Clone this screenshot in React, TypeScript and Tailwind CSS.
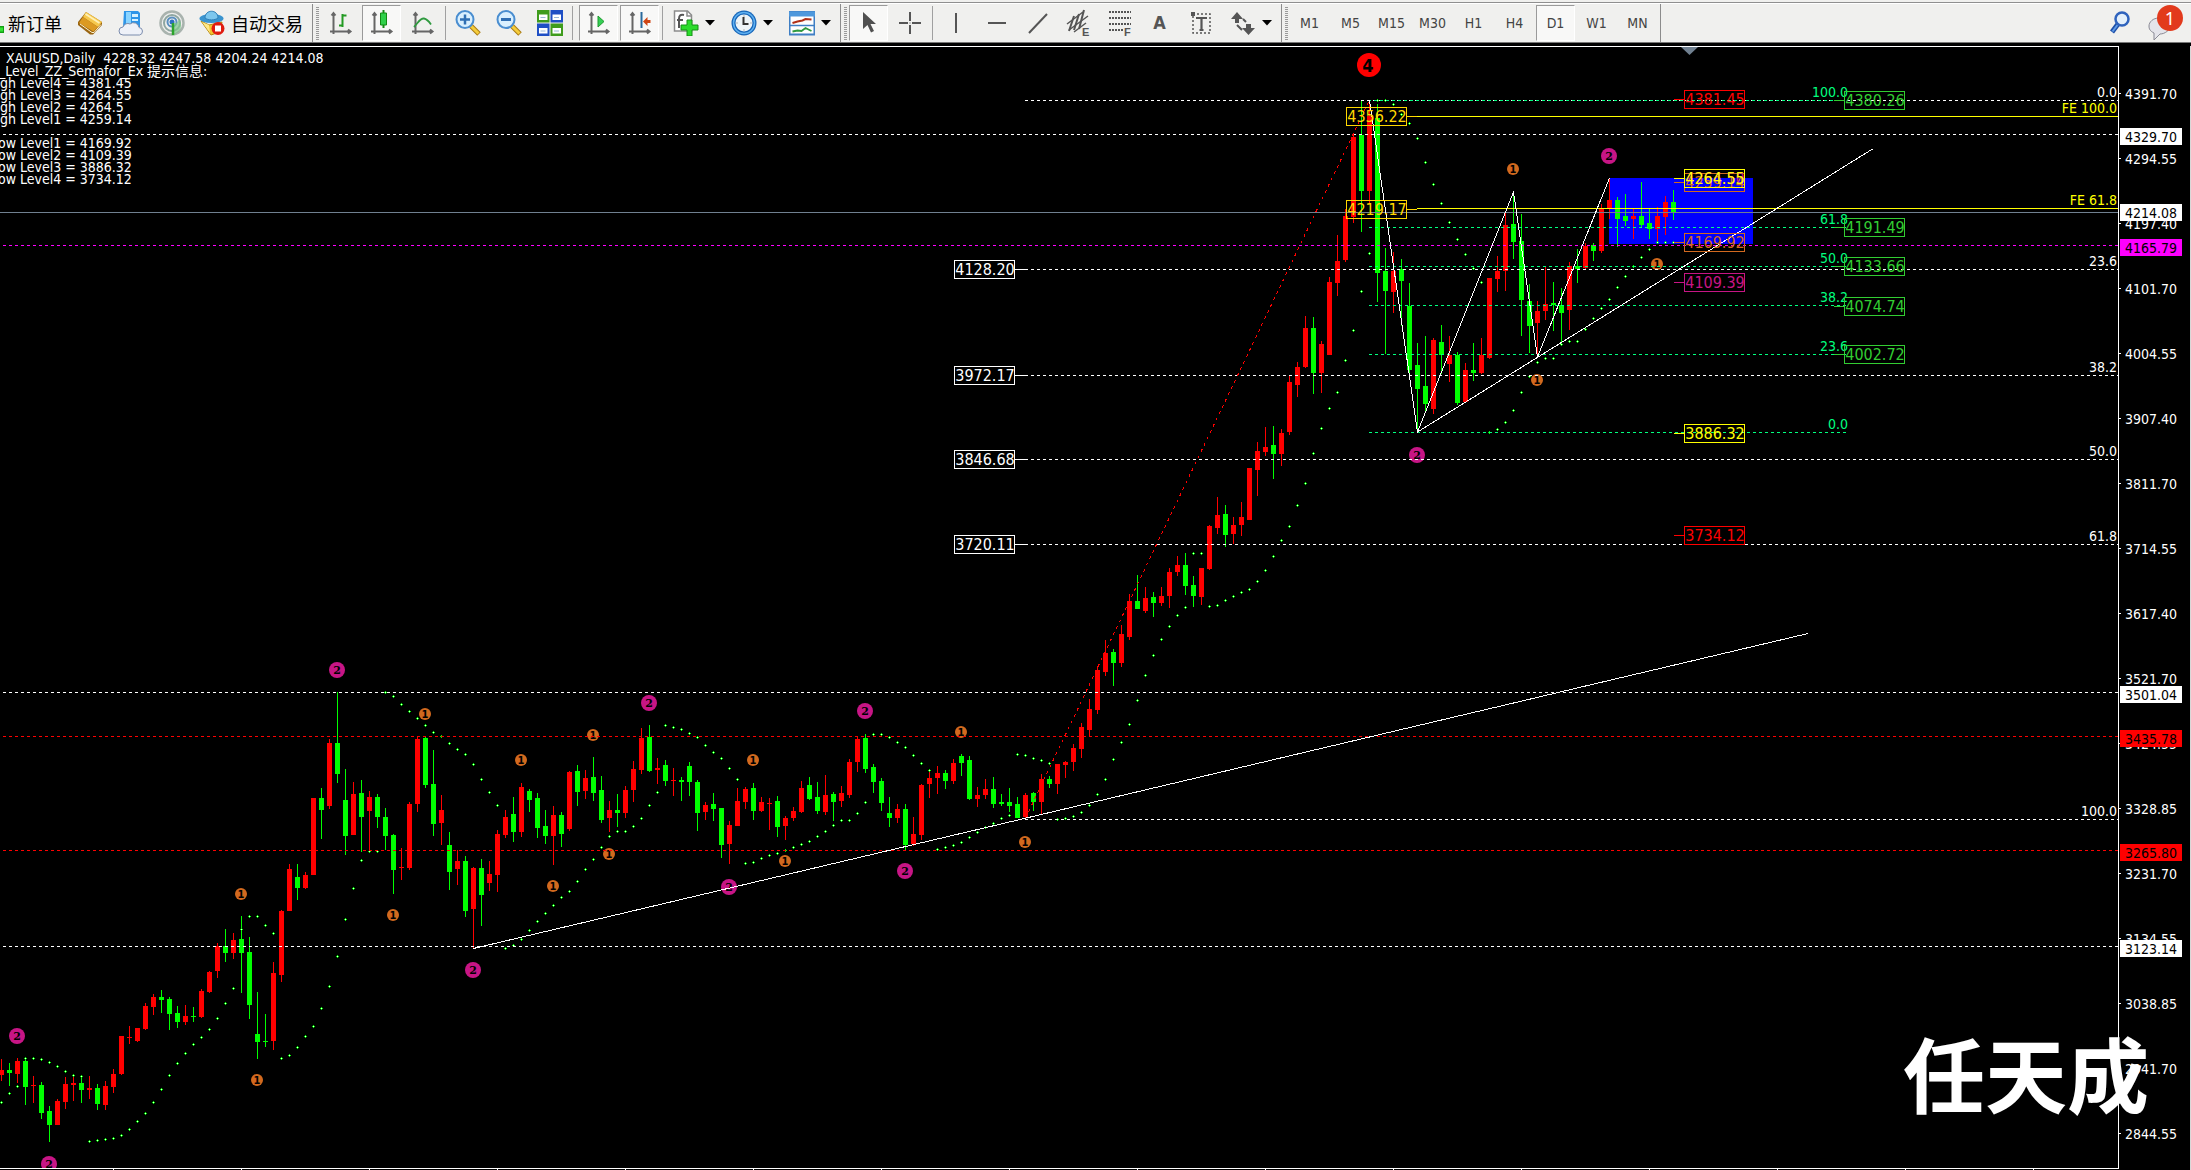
import React from "react";
import clsx from "clsx";

type Candle = [number, number, number, number];

// open, high, low, close as heights on the chart; one candle every 8 units
const candles: Candle[] = [
  [1075, 1059, 1081, 1070], [1070, 1063, 1086, 1073], [1074, 1058, 1083, 1061], [1061, 1059, 1105, 1087],
  [1086, 1076, 1103, 1085], [1085, 1082, 1119, 1113], [1111, 1106, 1142, 1125], [1125, 1099, 1125, 1101],
  [1102, 1077, 1109, 1084], [1085, 1076, 1101, 1083], [1083, 1076, 1103, 1090], [1090, 1076, 1099, 1088],
  [1088, 1084, 1110, 1104], [1105, 1081, 1110, 1086], [1087, 1069, 1093, 1074], [1074, 1036, 1075, 1036],
  [1038, 1026, 1044, 1037], [1041, 1028, 1042, 1028], [1029, 1003, 1030, 1006], [1007, 994, 1015, 997],
  [997, 990, 1013, 1000], [999, 997, 1030, 1014], [1013, 1006, 1028, 1022], [1022, 1005, 1025, 1016],
  [1016, 1007, 1022, 1017], [1017, 989, 1018, 991], [992, 971, 993, 972], [971, 943, 978, 946],
  [946, 929, 962, 953], [953, 933, 959, 940], [939, 916, 993, 953], [952, 937, 1019, 1005],
  [1034, 992, 1059, 1042], [1041, 1014, 1047, 1042], [1041, 962, 1050, 973], [975, 910, 982, 911],
  [911, 864, 911, 869], [877, 864, 900, 888], [888, 872, 889, 875], [875, 798, 875, 798],
  [798, 788, 839, 810], [806, 739, 809, 743], [743, 692, 783, 774], [800, 769, 855, 836],
  [835, 782, 835, 794], [793, 780, 852, 817], [811, 791, 852, 797], [797, 794, 828, 817],
  [817, 808, 850, 836], [835, 834, 894, 870], [868, 848, 880, 867], [868, 802, 870, 804],
  [804, 736, 812, 739], [738, 737, 788, 785], [784, 750, 836, 824], [823, 795, 845, 810],
  [845, 832, 890, 872], [869, 850, 885, 861], [861, 856, 917, 911], [909, 867, 948, 868],
  [868, 859, 926, 895], [883, 861, 891, 874], [875, 830, 892, 834], [835, 810, 838, 817],
  [814, 797, 842, 832], [832, 783, 837, 787], [791, 789, 812, 800], [798, 793, 838, 828],
  [826, 810, 844, 836], [836, 806, 865, 815], [815, 812, 847, 834], [829, 771, 831, 772],
  [771, 765, 806, 792], [791, 770, 799, 778], [777, 757, 801, 793], [790, 776, 823, 820],
  [818, 801, 832, 810], [810, 794, 827, 813], [813, 786, 818, 790], [790, 761, 802, 769],
  [770, 728, 774, 738], [737, 725, 772, 771], [770, 758, 784, 768], [765, 760, 786, 781],
  [781, 768, 796, 780], [780, 777, 801, 782], [766, 762, 796, 782], [782, 780, 831, 813],
  [812, 802, 820, 805], [804, 793, 821, 809], [808, 808, 858, 845], [844, 821, 864, 825],
  [826, 788, 826, 801], [802, 787, 809, 789], [788, 783, 820, 811], [811, 797, 812, 802],
  [804, 798, 830, 803], [801, 796, 837, 827], [826, 816, 840, 818], [818, 807, 821, 811],
  [812, 781, 813, 788], [785, 777, 800, 799], [797, 782, 814, 811], [812, 775, 815, 795],
  [794, 792, 821, 802], [801, 786, 807, 793], [795, 759, 798, 762], [762, 737, 772, 739],
  [738, 734, 773, 769], [767, 764, 793, 782], [781, 778, 811, 803], [813, 797, 827, 818],
  [818, 804, 823, 809], [809, 804, 850, 845], [844, 817, 846, 834], [835, 784, 840, 785],
  [784, 771, 798, 778], [778, 766, 794, 773], [773, 770, 789, 781], [781, 759, 784, 763],
  [756, 754, 776, 763], [760, 756, 800, 799], [799, 787, 807, 795], [795, 779, 799, 789],
  [789, 777, 808, 804], [802, 794, 806, 804], [802, 788, 812, 806], [804, 797, 818, 818],
  [817, 793, 819, 795], [793, 792, 811, 802], [802, 774, 814, 779], [779, 776, 788, 784],
  [784, 764, 794, 764], [765, 761, 778, 762], [762, 744, 771, 748], [749, 723, 758, 727],
  [730, 699, 737, 709], [710, 666, 714, 670], [672, 640, 676, 653], [652, 649, 686, 663],
  [663, 625, 667, 634], [637, 594, 640, 601], [601, 575, 609, 609], [611, 587, 613, 598],
  [597, 592, 617, 603], [603, 587, 606, 596], [596, 568, 608, 572], [572, 556, 576, 565],
  [565, 553, 595, 586], [585, 576, 607, 596], [597, 568, 605, 568], [569, 525, 570, 526],
  [528, 497, 534, 515], [514, 505, 547, 535], [534, 517, 544, 525], [525, 502, 536, 517],
  [520, 468, 520, 468], [470, 442, 496, 451], [452, 427, 456, 447], [445, 426, 479, 454],
  [454, 429, 466, 433], [432, 376, 435, 382], [385, 362, 397, 367], [367, 316, 368, 328],
  [328, 317, 394, 373], [373, 341, 393, 344], [355, 277, 355, 282], [283, 235, 296, 261],
  [260, 209, 262, 216], [217, 133, 223, 137], [135, 101, 232, 191], [191, 101, 203, 116],
  [118, 104, 302, 273], [271, 248, 354, 291], [292, 252, 313, 271], [269, 259, 326, 281],
  [306, 283, 373, 370], [365, 343, 432, 389], [386, 336, 413, 404], [409, 338, 414, 340],
  [342, 325, 374, 355], [364, 336, 382, 355], [355, 352, 405, 403], [402, 363, 403, 370],
  [370, 343, 381, 373], [373, 338, 374, 355], [358, 278, 359, 278], [279, 256, 292, 271],
  [271, 211, 291, 225], [224, 193, 259, 242], [241, 214, 336, 300], [301, 284, 353, 326],
  [323, 301, 357, 311], [311, 267, 320, 304], [303, 282, 331, 305], [305, 288, 345, 313],
  [310, 262, 330, 266], [266, 249, 283, 269], [268, 243, 269, 246], [245, 243, 261, 251],
  [251, 204, 253, 209], [209, 178, 219, 200], [200, 197, 247, 219], [216, 194, 226, 221],
  [219, 209, 239, 216], [216, 182, 228, 225], [223, 209, 239, 229], [229, 207, 243, 216],
  [217, 196, 235, 202], [202, 190, 220, 213],
];

// Parabolic SAR, one value per candle
const sar = [
  1102, 1093, 1086, 1058, 1058, 1059, 1062, 1066, 1071, 1075, 1076, 1141, 1140, 1139, 1138, 1135, 1129, 1121, 1113,
  1102, 1089, 1075, 1063, 1053, 1044, 1037, 1029, 1018, 1003, 988, 929, 916, 916, 925, 933, 1058, 1055, 1047, 1036,
  1026, 1008, 986, 956, 919, 888, 860, 851, 851, 692, 696, 704, 711, 718, 725, 732, 736, 743, 749, 754, 764, 779,
  792, 805, 948, 945, 939, 930, 921, 913, 905, 897, 891, 881, 869, 859, 847, 836, 831, 831, 826, 818, 805, 792, 725,
  727, 729, 733, 737, 745, 752, 758, 768, 779, 863, 862, 858, 855, 853, 850, 847, 844, 841, 836, 831, 825, 820, 820,
  813, 802, 734, 734, 737, 742, 747, 755, 763, 770, 849, 847, 845, 842, 837, 832, 827, 823, 818, 815, 754, 755, 758,
  760, 763, 819, 818, 816, 812, 805, 794, 779, 759, 742, 724, 700, 675, 655, 639, 626, 615, 607, 553, 553, 606, 605,
  600, 596, 592, 589, 581, 570, 556, 540, 526, 505, 483, 453, 428, 408, 392, 360, 330, 291, 253, 100, 100, 104, 114,
  123, 138, 162, 184, 203, 222, 239, 254, 268, 282, 432, 429, 422, 410, 392, 376, 362, 358, 358, 344, 341, 341, 329,
  318, 308, 299, 287, 276, 266, 257, 249, 242, 242, 242,
];

const bigMarks = [
  [337, 670], [17, 1036], [49, 1164], [473, 970], [649, 703], [865, 711], [729, 887], [905, 871], [1417, 455],
  [1609, 156],
];

const smallMarks = [
  [425, 714], [521, 760], [241, 894], [393, 915], [257, 1080], [553, 886], [593, 735], [753, 760], [609, 854],
  [785, 861], [961, 732], [1025, 842], [1513, 169], [1537, 380], [1657, 264],
];

const axisPrices = [
  "4391.70", "4294.55", "4197.40", "4101.70", "4004.55", "3907.40", "3811.70", "3714.55", "3617.40", "3521.70",
  "3424.55", "3328.85", "3231.70", "3134.55", "3038.85", "2941.70", "2844.55",
];

const axisTags = [
  { price: "4329.70", y: 128, box: "fill-white", text: "fill-black" },
  { price: "4214.08", y: 204, box: "fill-white", text: "fill-black" },
  { price: "4165.79", y: 239, box: "fill-[#ff00ff]", text: "fill-black" },
  { price: "3501.04", y: 686, box: "fill-white", text: "fill-black" },
  { price: "3435.78", y: 730, box: "fill-[#ff0000]", text: "fill-black" },
  { price: "3265.80", y: 844, box: "fill-[#ff0000]", text: "fill-black" },
  { price: "3123.14", y: 940, box: "fill-white", text: "fill-black" },
];

const horizontals = [
  { y: 134, color: "stroke-white" },
  { y: 245, color: "stroke-[#ff00ff]" },
  { y: 692, color: "stroke-white" },
  { y: 736, color: "stroke-[#ff0000]" },
  { y: 850, color: "stroke-[#ff0000]" },
  { y: 946, color: "stroke-white" },
];

const whiteFibo = [
  { level: "0.0", y: 100 },
  { level: "23.6", y: 269 },
  { level: "38.2", y: 375 },
  { level: "50.0", y: 459 },
  { level: "61.8", y: 544 },
  { level: "100.0", y: 819 },
];

const greenFibo = [
  { level: "100.0", y: 100 },
  { level: "61.8", y: 227 },
  { level: "50.0", y: 266 },
  { level: "38.2", y: 305 },
  { level: "23.6", y: 354 },
  { level: "0.0", y: 432 },
];

// x, y of the box, text, colours, side of the little tick
const priceBoxes = [
  { x: 954, y: 260, price: "4128.20", stroke: "stroke-white", fill: "fill-white", tick: "right" },
  { x: 954, y: 366, price: "3972.17", stroke: "stroke-white", fill: "fill-white", tick: "right" },
  { x: 954, y: 450, price: "3846.68", stroke: "stroke-white", fill: "fill-white", tick: "right" },
  { x: 954, y: 535, price: "3720.11", stroke: "stroke-white", fill: "fill-white", tick: "right" },
  { x: 1346, y: 107, price: "4356.22", stroke: "stroke-[#ffd700]", fill: "fill-[#ffd700]", tick: "right" },
  { x: 1346, y: 200, price: "4219.17", stroke: "stroke-[#ffd700]", fill: "fill-[#ffd700]", tick: "right" },
  { x: 1684, y: 90, price: "4381.45", stroke: "stroke-[#ff0000]", fill: "fill-[#ff0000]", tick: "left" },
  { x: 1684, y: 173, price: "4259.14", stroke: "stroke-[#d2691e]", fill: "fill-[#d2691e]", tick: "left" },
  { x: 1684, y: 169, price: "4264.50", stroke: "stroke-[#c71585]", fill: "fill-[#c71585]", tick: "left" },
  { x: 1684, y: 169, price: "4264.55", stroke: "stroke-[#ffff00]", fill: "fill-[#ffff00]", tick: "left" },
  { x: 1684, y: 233, price: "4169.92", stroke: "stroke-[#d2691e]", fill: "fill-[#d2691e]", tick: "left" },
  { x: 1684, y: 273, price: "4109.39", stroke: "stroke-[#c71585]", fill: "fill-[#c71585]", tick: "left" },
  { x: 1684, y: 424, price: "3886.32", stroke: "stroke-[#ffff00]", fill: "fill-[#ffff00]", tick: "left" },
  { x: 1684, y: 526, price: "3734.12", stroke: "stroke-[#ff0000]", fill: "fill-[#ff0000]", tick: "left" },
  { x: 1844, y: 91, price: "4380.26", stroke: "stroke-[#32cd32]", fill: "fill-[#32cd32]", tick: "left" },
  { x: 1844, y: 218, price: "4191.49", stroke: "stroke-[#32cd32]", fill: "fill-[#32cd32]", tick: "left" },
  { x: 1844, y: 257, price: "4133.66", stroke: "stroke-[#32cd32]", fill: "fill-[#32cd32]", tick: "left" },
  { x: 1844, y: 297, price: "4074.74", stroke: "stroke-[#32cd32]", fill: "fill-[#32cd32]", tick: "left" },
  { x: 1844, y: 345, price: "4002.72", stroke: "stroke-[#32cd32]", fill: "fill-[#32cd32]", tick: "left" },
];

const comments = [
  { x: -1, y: 76, text: "_Level_ZZ_Semafor_Ex 提示信息:" },
  { x: 0, y: 88, text: "gh Level4 = 4381.45" },
  { x: 0, y: 100, text: "gh Level3 = 4264.55" },
  { x: 0, y: 112, text: "gh Level2 = 4264.5" },
  { x: 0, y: 124, text: "gh Level1 = 4259.14" },
  { x: -2, y: 148, text: "ow Level1 = 4169.92" },
  { x: -2, y: 160, text: "ow Level2 = 4109.39" },
  { x: -2, y: 172, text: "ow Level3 = 3886.32" },
  { x: -2, y: 184, text: "ow Level4 = 3734.12" },
];

const Chart = () => {
  return (
    <svg
      viewBox="0 46 2191 1124"
      className="block h-auto w-full font-['DejaVu_Sans_Condensed','Noto_Sans','Noto_Sans_CJK_SC',sans-serif] text-sm"
    >
      <defs>
        <clipPath id="plot">
          <rect x="0" y="46" width="2119" height="1122" />
        </clipPath>
      </defs>

      <rect x="1609" y="178" width="144" height="66" className="fill-[#0000ff]" />

      <g shapeRendering="crispEdges">
        {candles.map(([open, high, low, close], i) => {
          const top = Math.min(open, close);
          return (
            <g key={i} className={close < open ? "fill-[#ff0000]" : "fill-[#00ff00]"}>
              <rect x={8 * i + 1} y={high} width="1" height={low - high} />
              <rect x={8 * i - 1} y={top} width="5" height={Math.max(1, Math.abs(open - close))} />
            </g>
          );
        })}
        {sar.map((y, i) => (
          <g key={i}>
            <path d={`M${8 * i} ${y}h3v1h-3zM${8 * i + 1} ${y - 1}h1v3h-1z`} className="fill-[#00ff00]" />
            <rect x={8 * i + 1} y={y} width="1" height="1" className="fill-[#d8ffd8]" />
          </g>
        ))}
      </g>

      <g clipPath="url(#plot)">
        {bigMarks.map(([x, y]) => (
          <g key={`${x}-${y}`}>
            <circle cx={x} cy={y} r="8" className="fill-[#c71585]" />
            <text x={x} y={y + 4} textAnchor="middle" className="fill-black font-['DejaVu_Serif',serif] text-[11px] font-bold">
              2
            </text>
          </g>
        ))}
        {smallMarks.map(([x, y]) => (
          <g key={`${x}-${y}`}>
            <circle cx={x} cy={y} r="6" className="fill-[#d2691e]" />
            <text x={x} y={y + 4} textAnchor="middle" className="fill-black font-['DejaVu_Sans_Condensed',sans-serif] text-[11px] font-bold">
              1
            </text>
          </g>
        ))}
        <circle cx="1369" cy="65" r="12" className="fill-[#ff0000]" />
        <text x="1368" y="72" textAnchor="middle" className="fill-black text-[18px] font-bold">
          4
        </text>
      </g>

      <g shapeRendering="crispEdges" fill="none">
        {horizontals.map((line) => (
          <path key={line.y} d={`M3 ${line.y + 0.5}H2118`} strokeDasharray="3 3" className={line.color} />
        ))}
        <path d="M0 212.5H2118" className="stroke-[#708090]" />
        {whiteFibo.map((f) => (
          <path key={f.y} d={`M1025 ${f.y + 0.5}H2118`} strokeDasharray="3 3" className="stroke-white" />
        ))}
        {greenFibo.map((f) => (
          <path
            key={f.y}
            d={`M1369 ${f.y + 0.5}H1846`}
            strokeDasharray="3 3"
            strokeDashoffset={f.y === 100 ? 1 : 0}
            className="stroke-[#00ff7f]"
          />
        ))}
        <path d="M1408 116.5H2118M1417 208.5H2118" className="stroke-[#ffff00]" />
        <path d="M1025.5 818L1369.5 100" strokeDasharray="3 4" className="stroke-[#ff0000]" />
        <path d="M473.5 948.5L1808 633.5" className="stroke-white" />
        <path d="M1417.5 432L1872.5 149" className="stroke-white" />
        <path d="M1369.5 100L1417.5 432L1513.5 192L1537.5 357L1609.5 178" className="stroke-white" />
        <path d="M0 46.5H2118.5V1168.5H0" className="stroke-white" />
        {Array.from({ length: 16 }, (_, i) => (
          <path key={i} d={`M${113.5 + 128 * i} 1169v1`} className="stroke-white" />
        ))}
      </g>
      <path d="M1681 47h17l-8.500 8z" className="fill-[#708090]" />

      {whiteFibo.map((f) => (
        <text key={f.y} x="2117" y={f.y - 3} textAnchor="end" className="fill-white">
          {f.level}
        </text>
      ))}
      {greenFibo.map((f) => (
        <text key={f.y} x="1848" y={f.y - 3} textAnchor="end" className="fill-[#00ff7f]">
          {f.level}
        </text>
      ))}
      <text x="2117" y="113" textAnchor="end" className="fill-[#ffff00]">
        FE 100.0
      </text>
      <text x="2117" y="205" textAnchor="end" className="fill-[#ffff00]">
        FE 61.8
      </text>

      {priceBoxes.map((b) => (
        <g key={b.price}>
          <g shapeRendering="crispEdges" fill="none" className={b.stroke}>
            <rect x={b.x + 0.5} y={b.y + 0.5} width="60" height="18" />
            <path d={`M${b.tick === "left" ? b.x - 10 : b.x + 61} ${b.y + 9.5}h10`} />
          </g>
          <text x={b.x + 31} y={b.y + 15} textAnchor="middle" className={clsx("text-base", b.fill)}>
            {b.price}
          </text>
        </g>
      ))}

      {/* price scale */}
      {axisPrices.map((price, i) => (
        <g key={price}>
          <path d={`M2119 ${93.5 + 65 * i}h2`} className="stroke-white" />
          <text x="2125" y={99 + 65 * i} className="fill-white">
            {price}
          </text>
        </g>
      ))}
      {axisTags.map((tag) => (
        <g key={tag.price}>
          <rect x="2120" y={tag.y} width="62" height="17" className={tag.box} />
          <text x="2125" y={tag.y + 14} className={tag.text}>
            {tag.price}
          </text>
        </g>
      ))}
      <rect x="2190" y="46" width="1" height="1124" className="fill-[#d8d8d8]" />

      <text x="6" y="63" className="whitespace-pre fill-white">
        {"XAUUSD,Daily  4228.32 4247.58 4204.24 4214.08"}
      </text>
      {comments.map((c) => (
        <text key={c.y} x={c.x} y={c.y} className="fill-white">
          {c.text}
        </text>
      ))}

      <text x="1903" y="1107" className="fill-white font-['Noto_Sans_CJK_SC',sans-serif] text-[82px] font-bold">
        任天成
      </text>
    </svg>
  );
};

const Grip = () => (
  <div className="mr-px ml-[3px] h-[33px] w-[3px] bg-[repeating-linear-gradient(to_bottom,#9a9a9a_0_1px,#f0f0ee_1px_2px)]" />
);

const Divider = () => <div className="mr-px ml-[2px] h-[34px] w-px bg-[#a0a0a0]" />;

const GroupEnd = () => <div className="ml-[2px] h-full w-px bg-[#8c8c8c]" />;

const Caret = () => (
  <svg width="10" height="6" viewBox="0 0 10 6">
    <path d="M0 0h10L5 5.500z" />
  </svg>
);

type ToolProps = {
  label: string;
  active?: boolean;
  menu?: boolean;
  children: React.ReactNode;
};

const Tool = ({ label, active, menu, children }: ToolProps) => (
  <button
    type="button"
    aria-label={label}
    aria-pressed={active}
    className={clsx("flex h-full shrink-0 items-center justify-center", menu ? "w-[58px] gap-1.5 pl-0.5" : "w-[41px]")}
  >
    <span
      className={clsx("flex items-center justify-center", {
        "h-[36px] w-[39px] border border-t-[#9a9a9a] border-l-[#9a9a9a] border-r-white border-b-white bg-[#f8f8f7]":
          active,
      })}
    >
      {children}
    </span>
    {menu && <Caret />}
  </button>
);

const Icon = ({ children }: { children: React.ReactNode }) => (
  <svg width="26" height="26" viewBox="0 0 26 26" fill="none" className="block">
    {children}
  </svg>
);

// the L shaped axes shared by the chart icons
const Axes = () => (
  <path
    d="M5.500 3v21M2 21.500h19M3.500 5.500l2-2.500 2 2.500M20 19.500l2.500 2-2.500 2"
    className="stroke-[#666]"
    strokeWidth="2"
  />
);

const timeframes = ["M1", "M5", "M15", "M30", "H1", "H4", "D1", "W1", "MN"];

const Toolbar = () => {
  return (
    <header className="h-[46px] overflow-hidden bg-black">
      <div className="h-[2px] bg-[#f0f0ee]" />
      <div className="h-px bg-[#8f8f8f]" />
      <div className="flex h-[40px] items-center border-t border-b border-t-white border-b-[#777] bg-[#f0f0ee] font-['Noto_Sans_CJK_SC',sans-serif] text-lg leading-none text-black">
        <button type="button" className="flex h-full w-[69px] shrink-0 items-center gap-1 whitespace-nowrap">
          <svg width="4" height="26" viewBox="0 0 4 26">
            <path d="M0 16h4v7H0z" className="fill-[#12a012]" />
            <path d="M0 17.500h3v4H0z" className="fill-[#36e236]" />
          </svg>
          新订单
        </button>
        <Tool label="市场">
          <Icon>
            <path d="M9 2l16 10v3l-9 9.500h-3L1 15v-3z" className="fill-[#9a6510]" />
            <path d="M9 2l16 10-4 5L6 7z" className="fill-[#f6c84c]" />
            <path d="M6 7l15 10-4.500 4.500L2 13z" className="fill-[#dc9a22]" />
            <path d="M8.500 4l14 9" className="stroke-[#fff0b4]" strokeWidth="2" />
            <path d="M3 14l12 8.500h2l7-8" className="stroke-[#fff2cc]" strokeWidth="1" />
          </Icon>
        </Tool>
        <Tool label="虚拟主机">
          <Icon>
            <path d="M6 1h14l2 2v14H5z" className="fill-[#2e95e8]" />
            <path d="M8 2h5v13H8z" className="fill-[#8ad4ff]" />
            <path d="M14 4h6v3h-6zM14 9h6v2h-6z" className="fill-[#d6f1ff]" />
            <path
              d="M5 25a4 4 0 010-8 5 5 0 017-3 5.500 5.500 0 019 3.500 3.800 3.800 0 01.500 7.500z"
              className="fill-[#eef1f8] stroke-[#7b8cad]"
            />
          </Icon>
        </Tool>
        <Tool label="信号">
          <Icon>
            <circle cx="13" cy="13" r="11.500" className="stroke-[#a9b3ae]" strokeWidth="2.500" />
            <circle cx="13" cy="13" r="8" className="stroke-[#8fa7a2]" strokeWidth="2" />
            <circle cx="13" cy="12" r="4.500" className="stroke-[#5a8fc0]" strokeWidth="2" />
            <circle cx="13" cy="12" r="2.500" className="fill-[#2d6fc0]" />
            <path d="M13 13v12a12 12 0 008-5c2-4 1-8-1-11-1 4-3 5-7 4z" className="fill-[#7fc68b]" opacity="0.7" />
            <path d="M14 13v12" className="stroke-[#2ca42c]" strokeWidth="2.500" />
          </Icon>
        </Tool>
        <button type="button" className="flex h-full w-[118px] shrink-0 items-center gap-1.5 pl-[7px] whitespace-nowrap">
          <svg width="26" height="26" viewBox="0 0 26 26" className="shrink-0">
            <path d="M2 11l8 4 13-3-2 10-9 3z" className="fill-[#f3c52f] stroke-[#b68a13]" />
            <path d="M3 12l7 3 1 8z" className="fill-[#ffe98a]" />
            <ellipse cx="12.500" cy="8.500" rx="12" ry="4.500" className="fill-[#3a94cf]" />
            <path d="M6 8c0-9 13-9 13 0-3 2.500-10 2.500-13 0z" className="fill-[#7cc7ee] stroke-[#2f80b8]" />
            <circle cx="19" cy="18.500" r="6.500" className="fill-[#e01c10]" />
            <path d="M16 15.500h6v6h-6z" className="fill-white" />
          </svg>
          自动交易
        </button>
        <GroupEnd />

        <Grip />
        <Tool label="柱状图">
          <Icon>
            <Axes />
            <path d="M14.500 4v13M14.500 5.500h4M11 15.500h3.500" className="stroke-[#239a23]" strokeWidth="2" />
          </Icon>
        </Tool>
        <Tool label="蜡烛图" active>
          <Icon>
            <Axes />
            <path d="M14.500 0v18" className="stroke-[#168a16]" strokeWidth="2" />
            <path d="M11.500 3h6v12h-6z" className="fill-[#2fd04a] stroke-[#128a12]" />
          </Icon>
        </Tool>
        <Tool label="折线图">
          <Icon>
            <Axes />
            <path d="M4 17c4-4 6-9 10-8.500 3 .500 5 3 7 6" className="stroke-[#2f9a3f]" strokeWidth="1.800" />
          </Icon>
        </Tool>
        <Divider />
        <Tool label="放大">
          <Icon>
            <path d="M16 16l8 8" className="stroke-[#a87a12]" strokeWidth="5" />
            <path d="M16 16l7.500 7.500" className="stroke-[#f5cd3c]" strokeWidth="3" />
            <circle cx="10" cy="9.500" r="8.500" className="fill-[#d9f0ff] stroke-[#4a8ed0]" strokeWidth="2" />
            <path d="M5 9.500h10M10 4.500v10" className="stroke-[#2f6fb4]" strokeWidth="2.500" />
          </Icon>
        </Tool>
        <Tool label="缩小">
          <Icon>
            <path d="M16 16l8 8" className="stroke-[#a87a12]" strokeWidth="5" />
            <path d="M16 16l7.500 7.500" className="stroke-[#f5cd3c]" strokeWidth="3" />
            <circle cx="10" cy="9.500" r="8.500" className="fill-[#d9f0ff] stroke-[#4a8ed0]" strokeWidth="2" />
            <path d="M5 9.500h10" className="stroke-[#2f6fb4]" strokeWidth="3" />
          </Icon>
        </Tool>
        <Tool label="平铺窗口">
          <Icon>
            <path d="M0 0h12.500v12.500H0zM13.500 13.500H26V26H13.500z" className="fill-[#3f9c1c]" />
            <path d="M13.500 0H26v12.500H13.500zM0 13.500h12.500V26H0z" className="fill-[#1f4fc4]" />
            <path d="M2 4.500h8.500V10H2zM15.500 4.500H24V10h-8.500zM2 18h8.500v5.500H2zM15.500 18H24v5.500h-8.500z" className="fill-white" />
            <path d="M3.500 7.500h5M17 7.500h5M3.500 21h5M17 21h5" className="stroke-[#9ab8d8]" />
          </Icon>
        </Tool>
        <Divider />
        <div className="w-1" />
        <Tool label="自动滚动" active>
          <Icon>
            <Axes />
            <path d="M12 6l6 5.500-6 5.500z" className="fill-[#35cf55] stroke-[#1f9a2f]" />
          </Icon>
        </Tool>
        <Tool label="图表平移" active>
          <Icon>
            <Axes />
            <path d="M14.500 2v16" className="stroke-[#2a6a9c]" strokeWidth="2" />
            <path d="M16 11.500l4.500-4.500v3h3v3h-3v3z" className="fill-[#cf4514]" />
          </Icon>
        </Tool>
        <Divider />
        <Tool label="技术指标" menu>
          <Icon>
            <path d="M1.500 1h13l4 4v16h-17z" className="fill-white stroke-[#8c8c8c]" strokeWidth="1.500" />
            <path d="M14 1v5h5" className="stroke-[#8c8c8c]" strokeWidth="1.500" />
            <path d="M11 5c-4-1-5 1-5 4v9M4 10h6" className="stroke-[#555]" strokeWidth="2" />
            <path d="M14 10h5v5h6v5h-6v6h-5v-6H8v-5h6z" className="fill-[#2bdc2b] stroke-[#159015]" />
          </Icon>
        </Tool>
        <Tool label="时间周期" menu>
          <Icon>
            <circle cx="13" cy="13" r="12.500" className="fill-[#1665b8]" />
            <circle cx="13" cy="13" r="10.500" className="stroke-[#5fb0f0]" strokeWidth="1.500" />
            <circle cx="13" cy="13" r="8.500" className="fill-[#eef4f8]" />
            <path d="M12.500 7v7h5" className="stroke-[#333]" strokeWidth="2" />
            <path d="M13 5.500v1M13 19.500v1M5.500 13h1M19.500 13h1" className="stroke-[#777]" />
          </Icon>
        </Tool>
        <Tool label="模板" menu>
          <Icon>
            <path d="M.5 2h25v22.500H.5z" className="fill-white stroke-[#3f7fc4]" strokeWidth="2" />
            <path d="M0 1.500h26v5H0z" className="fill-[#4e98dc]" />
            <path d="M1 15.500h24" className="stroke-[#3f7fc4]" strokeWidth="1.500" />
            <path d="M3.500 13l5-1.500 5-1 3-1.500 6 .500" className="stroke-[#b03018]" strokeWidth="2" />
            <path d="M3.500 21.500l5-1 4 .500 4-3 6 3" className="stroke-[#2f9a3f]" strokeWidth="1.800" />
          </Icon>
        </Tool>
        <GroupEnd />

        <Grip />
        <Tool label="光标" active>
          <Icon>
            <path d="M7 2v17l4.500-4 3.500 7.500 3-1.500-3.500-7H20z" className="fill-[#505050]" />
          </Icon>
        </Tool>
        <Tool label="十字准线">
          <Icon>
            <path d="M13 2v9M13 15v9M2 13h9M15 13h9" className="stroke-[#555]" strokeWidth="2" />
            <path d="M12.500 12.500h1v1h-1z" className="fill-[#555]" />
          </Icon>
        </Tool>
        <Divider />
        <Tool label="垂直线">
          <Icon>
            <path d="M14 3v20" className="stroke-[#555]" strokeWidth="2" />
          </Icon>
        </Tool>
        <Tool label="水平线">
          <Icon>
            <path d="M5 13h18" className="stroke-[#555]" strokeWidth="2" />
          </Icon>
        </Tool>
        <Tool label="趋势线">
          <Icon>
            <path d="M5 23L23 4" className="stroke-[#555]" strokeWidth="2" />
          </Icon>
        </Tool>
        <Tool label="等距通道">
          <svg width="26" height="28" viewBox="0 0 26 28" fill="none">
            <path d="M2 15L18 3M4 21L23 7M9 23l12-9" className="stroke-[#555]" strokeWidth="1.500" />
            <path d="M4 22l5-15M9 21l5-16M14 20l5-19" className="stroke-[#555]" strokeWidth="2" />
            <text x="17" y="27" className="fill-[#555] font-['Liberation_Sans',sans-serif] text-[11px] font-bold">
              E
            </text>
          </svg>
        </Tool>
        <Tool label="斐波那契回调线">
          <svg width="26" height="28" viewBox="0 0 26 28" fill="none">
            <path d="M3 3h22M3 9h22M3 15h22M3 21h14" className="stroke-[#555]" strokeWidth="2" strokeDasharray="2 1" />
            <text x="18" y="27" className="fill-[#555] font-['Liberation_Sans',sans-serif] text-[11px] font-bold">
              F
            </text>
          </svg>
        </Tool>
        <Tool label="文字">
          <span className="font-['DejaVu_Sans_Condensed','Noto_Sans',sans-serif] text-lg leading-none font-bold text-[#555]">
            A
          </span>
        </Tool>
        <Tool label="文字标签">
          <svg width="24" height="26" viewBox="0 0 24 26" fill="none">
            <path d="M4 4h17v19H4z" className="stroke-[#555]" strokeWidth="1.500" strokeDasharray="2 2" />
            <path d="M2 2h4v4H2z" className="fill-[#555]" />
            <path d="M7 8h11M12.500 8v12M10.500 20h4" className="stroke-[#555]" strokeWidth="2.200" />
          </svg>
        </Tool>
        <Tool label="箭头" menu>
          <Icon>
            <path d="M1 9l6-7 6 7H9v4H5V9zM12 18h4v-4h5v4h4l-6.500 7z" className="fill-[#555]" />
            <path d="M13 9l3 3M7 15l5 5" className="stroke-[#555]" strokeWidth="2" />
          </Icon>
        </Tool>
        <GroupEnd />

        <Grip />
        {timeframes.map((tf) => (
          <Tool key={tf} label={tf} active={tf === "D1"}>
            <span className="font-['DejaVu_Sans_Condensed','Noto_Sans',sans-serif] text-sm leading-none text-[#444]">
              {tf}
            </span>
          </Tool>
        ))}
        <GroupEnd />

        <div className="ml-auto flex h-full items-center gap-4 pr-2">
          <button type="button" aria-label="搜索">
            <svg width="22" height="24" viewBox="0 0 22 24" fill="none">
              <path d="M9 13l-6 8" className="stroke-[#1d4fa8]" strokeWidth="5" />
              <path d="M8.500 14l-5 6.500" className="stroke-[#5f9be8]" strokeWidth="2" />
              <circle cx="13" cy="8" r="6.500" className="fill-[#e4f0fb] stroke-[#2f63bd]" strokeWidth="2.500" />
            </svg>
          </button>
          <button type="button" aria-label="消息" className="relative h-[36px] w-[36px]">
            <svg width="26" height="26" viewBox="0 0 26 26" className="mt-3">
              <path
                d="M12 1c6 0 11 4 11 8s-5 8-10 8l-6 6v-7c-4-2-5-4-5-7 0-4 4-8 10-8z"
                className="fill-[#e4e4ea] stroke-[#8a8a94]"
              />
            </svg>
            <span className="absolute top-0 right-0 flex h-[26px] w-[26px] items-center justify-center rounded-full bg-[#e23a1c] font-['Noto_Sans',sans-serif] text-lg leading-none text-white">
              1
            </span>
          </button>
        </div>
      </div>
    </header>
  );
};

const App = () => {
  return (
    <div className="min-h-screen w-full overflow-hidden bg-black">
      <Toolbar />
      <Chart />
    </div>
  );
};

export default App;
